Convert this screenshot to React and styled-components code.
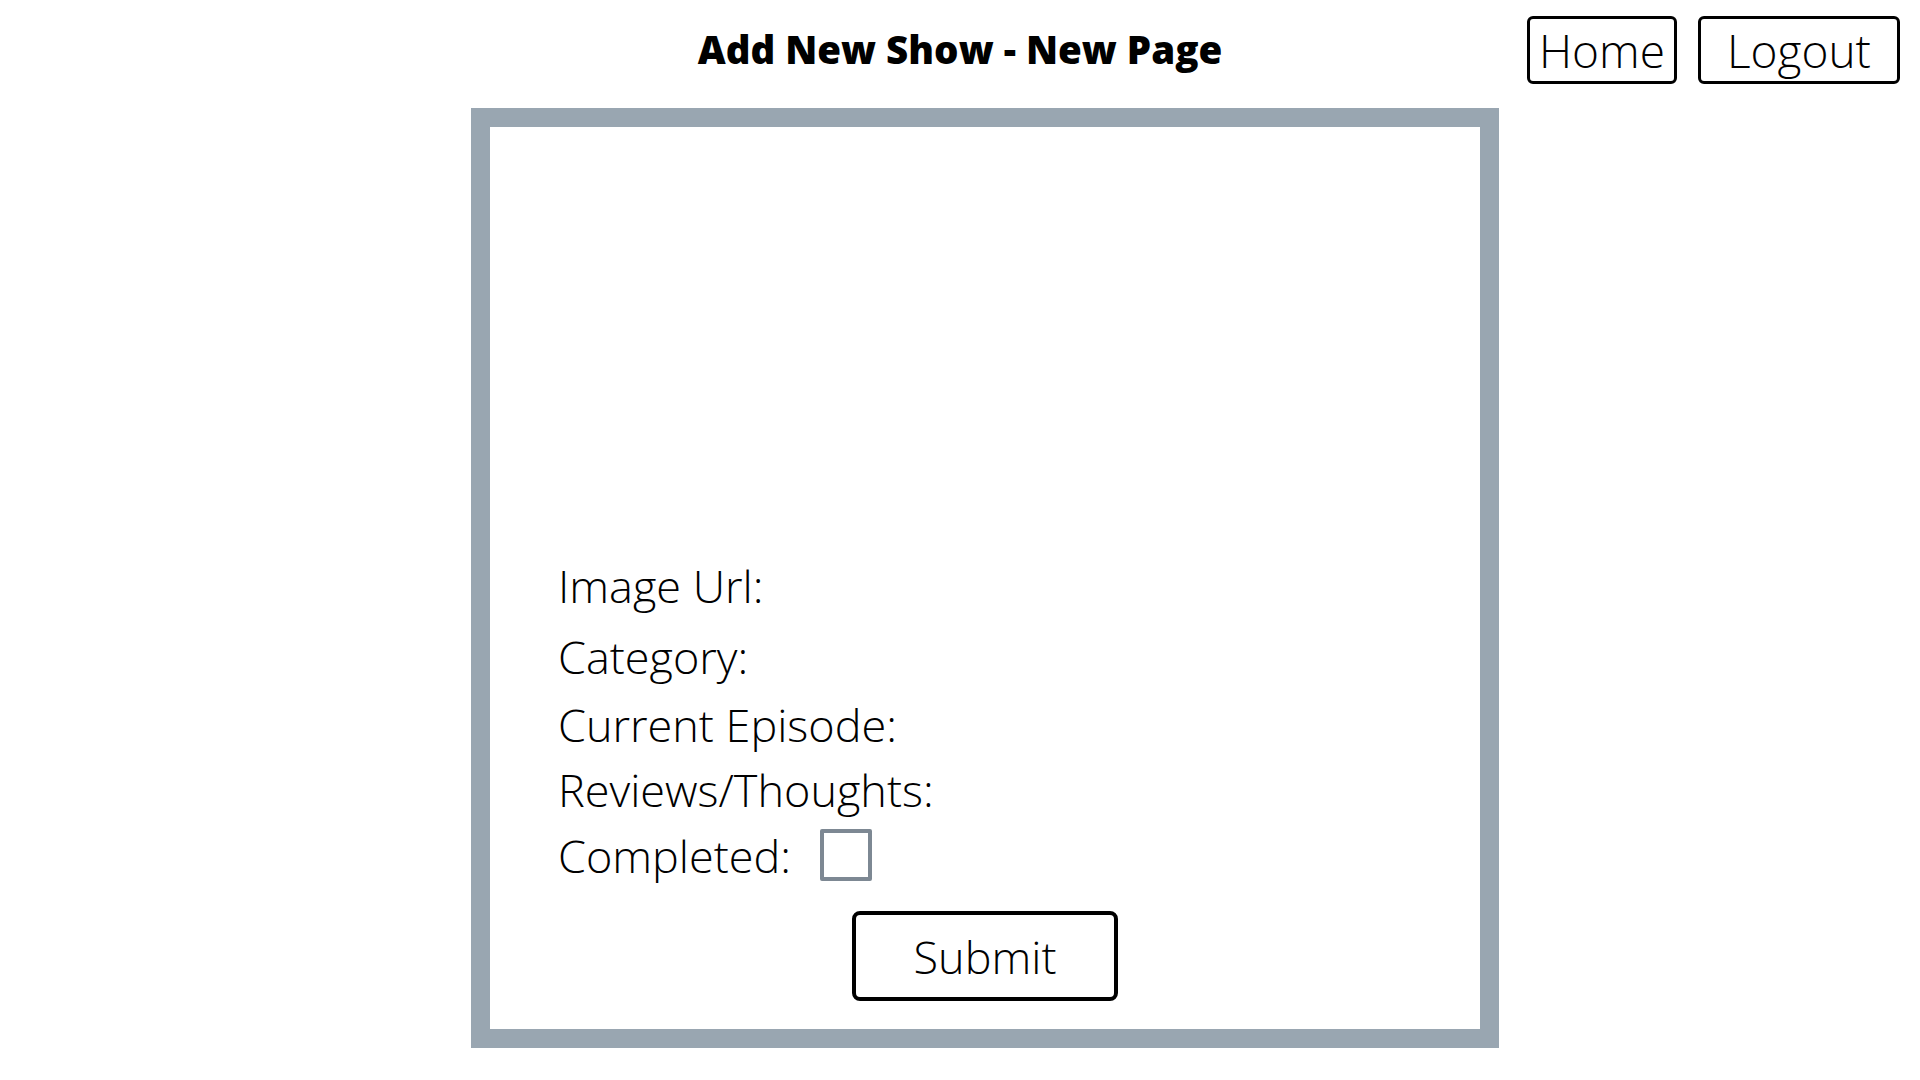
import React from "react";
import styled, { createGlobalStyle } from "styled-components";

const GlobalStyle = createGlobalStyle`
  html, body {
    margin: 0;
    padding: 0;
    background: #ffffff;
  }
  body {
    font-family: "Open Sans", "Liberation Sans", sans-serif;
    color: #000000;
  }
  * { box-sizing: border-box; }
`;

const Page = styled.div`
  width: 1920px;
  min-height: 1080px;
  display: flex;
  flex-direction: column;
  align-items: center;
`;

const Header = styled.header`
  width: 100%;
  height: 99px;
  display: grid;
  grid-template-columns: 1fr auto 1fr;
  align-items: center;
`;

const Title = styled.h1`
  grid-column: 2;
  margin: 0;
  font-size: 38.5px;
  font-weight: 800;
  line-height: 1;
  letter-spacing: 0;
`;

const Nav = styled.nav`
  grid-column: 3;
  justify-self: end;
  display: flex;
  gap: 21px;
  padding-right: 20px;
`;

const NavButton = styled.button`
  width: ${(p) => p.$width}px;
  height: 68px;
  border: 3px solid #000;
  border-radius: 6px;
  background: #fff;
  font-family: "Open Sans", sans-serif;
  font-weight: 300;
  font-size: 46px;
  line-height: 1;
  color: #000;
  padding: 0;
  display: flex;
  align-items: center;
  justify-content: center;
`;

const FormBox = styled.form`
  margin-top: 9px;
  margin-left: 50px;
  width: 1028px;
  height: 940px;
  border: 19px solid #99a6b1;
  display: flex;
  flex-direction: column;
  justify-content: flex-end;
  padding: 0 0 28px 68px;
`;

const Row = styled.div`
  display: flex;
  align-items: center;
  gap: 29px;
  margin-bottom: ${(p) => p.$space || 0}px;
`;

const Label = styled.label`
  font-size: 45px;
  font-weight: 300;
  line-height: 1.362;
`;

const Check = styled.input.attrs({ type: "checkbox" })`
  appearance: none;
  -webkit-appearance: none;
  margin: 0;
  width: 52px;
  height: 52px;
  border: 4px solid #7d8893;
  border-radius: 2px;
  background: #fff;
`;

const SubmitRow = styled.div`
  display: flex;
  justify-content: center;
  margin-top: 25px;
  padding-right: 68px;
`;

const SubmitButton = styled.button`
  width: 266px;
  height: 90px;
  border: 4px solid #000;
  border-radius: 8px;
  background: #fff;
  font-family: "Open Sans", sans-serif;
  font-weight: 300;
  font-size: 45px;
  color: #000;
  padding: 0;
  display: flex;
  align-items: center;
  justify-content: center;
`;

export default function App() {
  return (
    <>
      <GlobalStyle />
      <Page>
        <Header>
          <Title>Add New Show - New Page</Title>
          <Nav>
            <NavButton $width={150}>Home</NavButton>
            <NavButton $width={202}>Logout</NavButton>
          </Nav>
        </Header>
        <FormBox onSubmit={(e) => e.preventDefault()}>
          <Row $space={10}>
            <Label>Image Url:</Label>
          </Row>
          <Row $space={7}>
            <Label>Category:</Label>
          </Row>
          <Row $space={4}>
            <Label>Current Episode:</Label>
          </Row>
          <Row $space={4}>
            <Label>Reviews/Thoughts:</Label>
          </Row>
          <Row>
            <Label>Completed:</Label>
            <Check />
          </Row>
          <SubmitRow>
            <SubmitButton type="submit">Submit</SubmitButton>
          </SubmitRow>
        </FormBox>
      </Page>
    </>
  );
}
